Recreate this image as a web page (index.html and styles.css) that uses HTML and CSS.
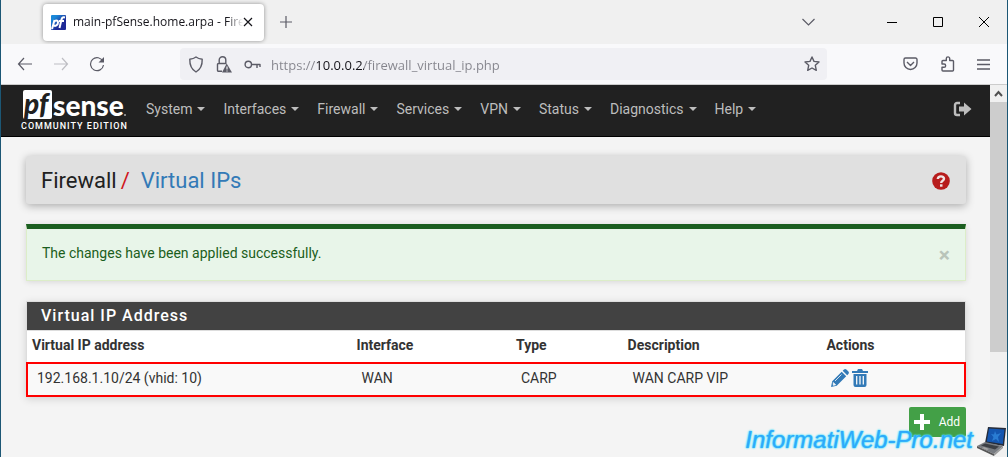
FILE: index.html
```html
<!DOCTYPE html>
<html lang="en">
<head>
<meta charset="utf-8">
<meta name="viewport" content="width=device-width, initial-scale=1">
<title>main-pfSense.home.arpa - Firewall: Virtual IPs</title>
<link rel="stylesheet" href="styles.css">
</head>
<body>
<div class="window">
  <header class="tabbar">
    <div class="tab">
      <svg class="favicon" viewBox="0 0 15 15" aria-hidden="true"><defs><linearGradient id="fav" x1="0" y1="0" x2="1" y2="1"><stop offset=".2" stop-color="#1a88d8"/><stop offset=".65" stop-color="#1f2a96"/></linearGradient></defs><rect width="15" height="15" rx="1" fill="url(#fav)"/><g fill="none" stroke="#fff" stroke-width="2"><path d="M1 14 3.500 5M3 7c1-2 4-2 4 .5S4 12 2.500 10M8.500 13l2-8.500C11 2.500 12 2 14 2.500M8 6h5"/></g></svg>
      <span class="tab-title">main-pfSense.home.arpa - Firew</span>
      <button class="plain" aria-label="Close tab"><svg width="10" height="10" viewBox="0 0 10 10"><path d="M1 1l8 8M9 1 1 9" class="line dark"/></svg></button>
    </div>
    <button class="plain new-tab" aria-label="New tab"><svg width="12" height="12" viewBox="0 0 12 12"><path d="M6 0v12M0 6h12" class="line"/></svg></button>
    <div class="window-controls">
      <button class="plain tab-list" aria-label="List all tabs"><svg width="13" height="8" viewBox="0 0 13 8"><path d="M.5 1l6 6 6-6" class="line"/></svg></button>
      <button class="plain" aria-label="Minimize"><svg width="10" height="10" viewBox="0 0 10 10"><path d="M0 5.500h10" class="line black"/></svg></button>
      <button class="plain" aria-label="Maximize"><svg width="10" height="10" viewBox="0 0 10 10"><path d="M.5.5h9v9h-9z" class="line black"/></svg></button>
      <button class="plain" aria-label="Close window"><svg width="10" height="10" viewBox="0 0 10 10"><path d="M0 0l10 10M10 0 0 10" class="line black"/></svg></button>
    </div>
  </header>

  <div class="toolbar">
    <div class="history">
      <button class="plain" aria-label="Back"><svg width="16" height="16" viewBox="0 0 16 16"><path d="M15 8H1.500M7 2 1.500 8 7 14" class="line"/></svg></button>
      <button class="plain" aria-label="Forward" disabled><svg width="16" height="16" viewBox="0 0 16 16"><path d="M1 8h13.500M9 2l5.500 6L9 14" class="line faded"/></svg></button>
      <button class="plain" aria-label="Reload"><svg width="16" height="16" viewBox="0 0 16 16"><path d="M14 5.500A6.500 6.500 0 1 0 14.500 9" class="line"/><path d="M15 1v5.500H9.500z" fill="#5b5b66"/></svg></button>
    </div>
    <div class="urlbar">
      <button class="plain" aria-label="Tracking protection"><svg width="16" height="17" viewBox="0 0 16 17"><path d="M8 1c2 1.500 4 2 6.200 2.200C14.400 9 13 13 8 16 3 13 1.600 9 1.800 3.200 4 3 6 2.500 8 1z" class="line thick"/></svg></button>
      <button class="plain" aria-label="Connection security"><svg width="16" height="17" viewBox="0 0 16 17"><path d="M6 15.300H2.500a1 1 0 0 1-1-1V8.500a1 1 0 0 1 1-1h8M3.200 7.500V4a3.300 3.300 0 0 1 6.600 0v3.500" class="line thick"/><path d="M10.700 7.500 16 16.500H6z" fill="#5b5b66"/><path d="M11 10.500v3M11 14.500v1" stroke="#f0f0f4" stroke-width="1.200"/></svg></button>
      <button class="plain" aria-label="Saved login"><svg width="17" height="11" viewBox="0 0 17 11"><circle cx="4.300" cy="5.500" r="3.200" class="line thick"/><path d="M7.500 5.500H16V8M13 5.500V9" class="line thick"/></svg></button>
      <input class="url" type="text" aria-label="Address" value="https://10.0.0.2/firewall_virtual_ip.php">
      <button class="plain" aria-label="Bookmark this page"><svg width="16" height="16" viewBox="0 0 16 16"><path d="m8 1 2 4.400 5 .6-3.700 3.300 1 5L8 12l-4.300 2.300 1-5L1 6l5-.6z" class="line thick"/></svg></button>
    </div>
    <div class="extras">
      <button class="plain" aria-label="Save to Pocket"><svg width="15" height="14" viewBox="0 0 15 14"><path d="M2.500 1h10A1.500 1.500 0 0 1 14 2.500V6A6.500 6.500 0 0 1 1 6V2.500A1.500 1.500 0 0 1 2.500 1zM4 5l3.500 3.500L11 5" class="line thick"/></svg></button>
      <button class="plain" aria-label="Extensions"><svg width="15" height="16" viewBox="0 0 15 16"><path d="M3 15h9.500a1 1 0 0 0 1-1V5.500a1 1 0 0 0-1-1H9.700V2.600a1.700 1.700 0 0 0-3.400 0v1.900H3a1 1 0 0 0-1 1V8h2a1.600 1.600 0 0 1 0 3.300H2V14a1 1 0 0 0 1 1z" class="line thick"/></svg></button>
      <button class="plain" aria-label="Menu"><svg width="13" height="11" viewBox="0 0 13 11"><path d="M0 1h13M0 5.500h13M0 10h13" class="line thick"/></svg></button>
    </div>
  </div>

  <div class="viewport">
    <div class="page">
      <nav class="navbar">
        <a class="brand" href="#" aria-label="pfSense Community Edition">
          <span class="logo"><span class="logo-mark">pf</span><span class="logo-text">sense</span><i class="logo-dot"></i></span>
          <span class="edition">COMMUNITY EDITION</span>
        </a>
        <ul class="menu">
          <li><a href="#">System<i class="caret"></i></a></li>
          <li><a href="#">Interfaces<i class="caret"></i></a></li>
          <li><a href="#">Firewall<i class="caret"></i></a></li>
          <li><a href="#">Services<i class="caret"></i></a></li>
          <li><a href="#">VPN<i class="caret"></i></a></li>
          <li><a href="#">Status<i class="caret"></i></a></li>
          <li><a href="#">Diagnostics<i class="caret"></i></a></li>
          <li><a href="#">Help<i class="caret"></i></a></li>
        </ul>
        <a class="logout" href="#" aria-label="Logout"><svg width="19" height="16" viewBox="0 0 19 16"><path d="M7 2H4a2 2 0 0 0-2 2v8a2 2 0 0 0 2 2h3" fill="none" stroke="#bdbdbd" stroke-width="2.400"/><path d="M6 5.500h5V1.500L18.500 8 11 14.500v-4H6z" fill="#bdbdbd"/></svg></a>
      </nav>

      <main class="content">
        <div class="page-header">
          <h1 class="crumbs"><span>Firewall</span><span class="slash">/</span><a href="#">Virtual IPs</a></h1>
          <a class="help" href="#" aria-label="Help for this page"><svg width="18" height="18" viewBox="0 0 18 18"><circle cx="9" cy="9" r="8.800" fill="#b71c1c"/><path d="M5.800 7C6 3.500 12 3.500 12 6.800 12 9 9.200 8.600 9.200 11" fill="none" stroke="#f0e4e4" stroke-width="2.400"/><path d="M8 12.300h2.500v2.400H8z" fill="#f0e4e4"/></svg></a>
        </div>

        <div class="alert" role="alert">
          <span>The changes have been applied successfully.</span>
          <button class="plain dismiss" aria-label="Dismiss">×</button>
        </div>

        <section class="panel">
          <h2 class="panel-title">Virtual IP Address</h2>
          <table class="ips">
            <colgroup><col class="col-address"><col class="col-interface"><col class="col-type"><col class="col-description"><col></colgroup>
            <thead><tr><th>Virtual IP address</th><th>Interface</th><th>Type</th><th>Description</th><th>Actions</th></tr></thead>
            <tbody><tr><td>192.168.1.10/24 (vhid: 10)</td><td>WAN</td><td>CARP</td><td>WAN CARP VIP</td><td>
              <div class="actions">
                <a href="#" aria-label="Edit virtual IP"><svg width="18" height="18" viewBox="0 0 18 18"><path d="M0 18l1.200-5.700L10.700 2.800l4.500 4.500-9.500 9.500zM11.700 1.800 13 .6q1.200-1 2.400 0l2 2q1 1.200 0 2.400l-1.200 1.300z" fill="#337ab7"/><path d="M2.300 13.500l2.300 2.300-2.300.5zM4 12l6.500-6.500" fill="#f9f9f9" stroke="#f9f9f9" stroke-width=".8"/></svg></a>
                <a href="#" aria-label="Delete virtual IP"><svg width="16" height="18" viewBox="0 0 16 18"><path d="M0 2h5l1-2h4l1 2h5v2H0zM1.500 5h13v11q0 2-2 2h-9q-2 0-2-2z" fill="#337ab7"/><path d="M4.700 7v8.500M8 7v8.500M11.300 7v8.500" stroke="#f9f9f9" stroke-width="1.300"/></svg></a>
              </div></td></tr></tbody>
          </table>
        </section>

        <div class="buttons"><button class="add"><svg width="16" height="16" viewBox="0 0 16 16" aria-hidden="true"><path d="M8 0v16M0 8h16" stroke="#fff" stroke-width="4"/></svg>Add</button></div>
      </main>
    </div>
    <div class="scrollbar" aria-hidden="true">
      <svg class="scroll-up" width="9" height="7" viewBox="0 0 9 7"><path d="M1 6l3.500-4L8 6" fill="none" stroke="#505050" stroke-width="2"/></svg>
      <div class="thumb"></div>
    </div>
  </div>

  <div class="watermark">
    <span class="watermark-text">InformatiWeb-Pro.net</span>
    <svg width="31" height="31" viewBox="0 0 31 31" aria-hidden="true"><path d="M12 1l18 1-2 18-19-3z" fill="#252b38"/><path d="M13 2.500l15.500 1L26.800 18 10.800 15.500z" fill="#1456b0"/><path d="M19 5l1.500 3.500L25 7l-3 4 1 5-3-3-4 2 1.500-4-2.500-3 3 .5z" fill="#2f86dc" opacity=".8"/><path d="M9 16l18 4-9 8-17-8z" fill="#777b80"/><path d="M9 17.500l14 3-4 3-14-4z" fill="#3c3f44"/><path d="M1 20l17 8v2L1 22z" fill="#555"/><path d="M18 28l9-8v2l-9 8z" fill="#999"/><path d="M8 21l5 2-2 1-5-2z" fill="#a5a5a5"/></svg>
  </div>
</div>
</body>
</html>
```
FILE: styles.css
```css
* { box-sizing: border-box; }

body {
  margin: 0;
  font-family: Roboto, sans-serif;
  font-size: 14px;
  line-height: 20px;
  color: #333;
}

a { color: #337ab7; text-decoration: none; }
svg { display: block; flex: none; }

.window {
  position: relative;
  display: flex;
  flex-direction: column;
  min-height: 100vh;
  border: 1px solid #1c5775;
  border-top: 0;
  overflow: hidden;
}

.plain { padding: 0; border: 0; background: none; font: inherit; flex: none; }
.line { fill: none; stroke: #5b5b66; stroke-width: 1.2; }
.thick { stroke-width: 1.4; stroke-linejoin: round; }
.dark { stroke: #15141a; }
.black { stroke: #000; stroke-width: 1; }
.faded { stroke: #bebec3; }

/* Browser tabs */
.tabbar {
  display: flex;
  align-items: center;
  height: 44px;
  padding: 0 18px 0 42px;
  background: #f0f0f0;
}

.tab {
  display: flex;
  align-items: center;
  width: 221px;
  height: 37px;
  padding: 0 11px 0 8px;
  background: #fff;
  border-radius: 4px;
  box-shadow: 0 0 4px rgba(0, 0, 0, .4);
}

.favicon { width: 15px; height: 15px; margin-right: 7px; }

.tab-title {
  flex: 1;
  min-width: 0;
  overflow: hidden;
  white-space: nowrap;
  font-family: "Open Sans", sans-serif;
  font-size: 12px;
  color: #15141a;
  mask-image: linear-gradient(to left, transparent, #000 16px);
}

.new-tab { margin-left: 16px; }
.window-controls { display: flex; align-items: center; gap: 36px; margin-left: auto; }
.tab-list { margin-right: 36px; }

/* Browser toolbar */
.toolbar {
  display: flex;
  align-items: center;
  height: 41px;
  padding-left: 16px;
  background: #f9f9fb;
  border-bottom: 1px solid #ccc;
}

.history { display: flex; gap: 20px; margin-right: 75px; }

.urlbar {
  display: flex;
  flex: 1;
  align-items: center;
  gap: 12px;
  height: 32px;
  padding: 0 7px 0 8px;
  background: #f0f0f4;
  border-radius: 4px;
}

.url {
  flex: 1;
  min-width: 0;
  height: 24px;
  padding: 2px 0 0;
  margin-left: -2px;
  border: 0;
  outline: 0;
  font-family: "Open Sans", sans-serif;
  font-size: 13px;
  color: transparent;
  background: linear-gradient(to right, #84848c 46px, #15141a 46px 93px, #84848c 93px) text;
}

.extras { display: flex; align-items: center; gap: 22px; padding: 0 17px 0 76px; }

/* Page area */
.viewport { display: flex; flex: 1; }
.page { flex: 1; min-width: 0; background: #f4f4f4; }

.navbar {
  display: flex;
  align-items: center;
  height: 52px;
  padding: 0 18px 3px 20px;
  background: #212121;
  border-bottom: 1px solid #000;
}

.brand { width: 106px; padding-top: 3px; color: #fff; }

.logo {
  display: flex;
  align-items: center;
  height: 30px;
  padding-left: 2px;
  font-family: Lato, sans-serif;
  font-size: 28px;
  font-weight: 900;
}

.logo-mark {
  width: 29px;
  height: 29px;
  padding-left: 1px;
  line-height: 26px;
  font-style: italic;
  color: #212121;
  background: #fff;
  border-radius: 2px;
}

.logo-text { margin-left: 1px; line-height: 28px; }
.logo-dot { align-self: flex-end; width: 2px; height: 2px; margin-bottom: 4px; border-radius: 1px; background: #aaa; }
.edition { display: block; font-size: 9px; font-weight: 500; line-height: 12px; letter-spacing: 1px; white-space: nowrap; }

.menu { display: flex; gap: 18px; margin: 0; padding: 0 0 0 19px; list-style: none; }
.menu a { display: flex; align-items: center; gap: 5px; color: #bdbdbd; }
.caret { border: 4px solid transparent; border-top-color: #bdbdbd; border-bottom: 0; }
.logout { margin-left: auto; }

.content { padding: 19px 24px 20px 25px; }

.page-header {
  display: flex;
  align-items: center;
  justify-content: space-between;
  height: 48px;
  padding: 2px 16px 0 15px;
  margin-bottom: 20px;
  background: #e0e0e0;
  border-radius: 3px;
  box-shadow: 0 2px 8px rgba(0, 0, 0, .3);
}

.crumbs { display: flex; margin: 0; font-size: 22px; font-weight: 400; line-height: 28px; color: #212121; }
.slash { margin: 0 11px 0 4px; color: #d0151c; }

.alert {
  display: flex;
  align-items: center;
  justify-content: space-between;
  height: 57px;
  padding: 0 15px 3px;
  margin-bottom: 20px;
  color: #1b5e20;
  background: #e8f5e9;
  border: 1px solid #dcedc8;
  border-top: 5px solid #1b5e20;
  box-shadow: 0 1px 6px rgba(0, 0, 0, .12);
}

.dismiss { padding-top: 3px; font-size: 21px; font-weight: 700; color: #b9c4ba; }

.panel {
  margin-bottom: 10px;
  background: #fff;
  border: 1px solid #ddd;
  box-shadow: 0 2px 8px rgba(0, 0, 0, .15);
}

.panel-title {
  margin: 0;
  padding: 0 14px;
  font-size: 16px;
  font-weight: 500;
  line-height: 28px;
  letter-spacing: 1px;
  color: #fff;
  background: #424242;
}

.ips { width: 100%; table-layout: fixed; border-collapse: separate; border-spacing: 0; }
.col-address { width: 34.6%; }
.col-interface { width: 17%; }
.col-type { width: 11.9%; }
.col-description { width: 21.2%; }
.ips th { padding: 4px 5px 8px; text-align: left; font-weight: 700; border-top: 1px solid #ddd; }
.ips td { height: 33px; padding: 0 10px 3px; background: #f9f9f9; }
.ips tbody tr { outline: 2px solid #f00; outline-offset: -1px; }
.actions { display: flex; gap: 3px; }

.buttons { display: flex; justify-content: flex-end; }

.add {
  display: flex;
  align-items: center;
  gap: 9px;
  height: 30px;
  padding: 0 6px 0 5px;
  border: 0;
  border-radius: 2px;
  font-family: inherit;
  font-size: 12px;
  color: #fff;
  background: #43a047;
}

.scrollbar { flex: none; width: 17px; background: #f0f0f0; }
.scroll-up { margin: 5px 4px; }
.thumb { height: 250px; background: #cdcdcd; }

/* Site mark laid over the lower right corner */
.watermark {
  position: absolute;
  right: 0;
  bottom: 0;
  display: flex;
  align-items: center;
  gap: 3px;
  pointer-events: none;
}

.watermark-text {
  padding-bottom: 3px;
  font-family: "Liberation Sans", sans-serif;
  font-size: 24px;
  font-style: italic;
  line-height: 28px;
  color: #2ea9fa;
  text-shadow: 0 0 1px #4be0ff, 0 0 2px #4be0ff, 0 0 2px #4be0ff;
}
```
